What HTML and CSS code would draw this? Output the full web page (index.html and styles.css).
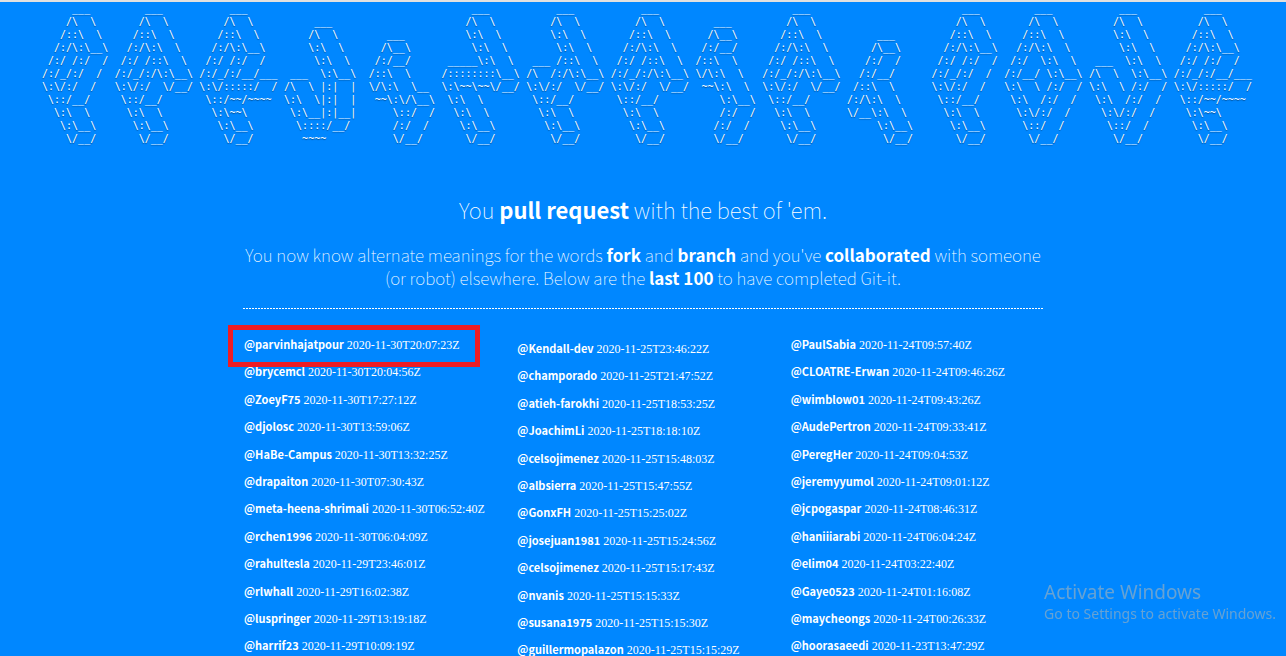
FILE: index.html
```html
<!DOCTYPE html>
<html lang="en">
<head>
<meta charset="utf-8">
<title>Git-it</title>
<link rel="stylesheet" href="styles.css">
</head>
<body>
<header class="banner">
<pre class="glyph">
     ___
    /\  \
   /::\  \
  /:/\:\__\
 /:/ /:/  /
/:/_/:/  /
\:\/:/  /
 \::/__/
  \:\  \
   \:\__\
    \/__/</pre>
<pre class="glyph">
     ___
    /\  \
   /::\  \
  /:/\:\  \
 /:/ /::\  \
/:/_/:/\:\__\
\:\/:/  \/__/
 \::/__/
  \:\  \
   \:\__\
    \/__/</pre>
<pre class="glyph">
     ___
    /\  \
   /::\  \
  /:/\:\__\
 /:/ /:/  /
/:/_/:/__/___
\:\/:::::/  /
 \::/~~/~~~~
  \:\~~\
   \:\__\
    \/__/</pre>
<pre class="glyph">

     ___
    /\  \
    \:\  \
     \:\  \
 ___  \:\__\ 
/\  \ |:|  |
\:\  \|:|  |
 \:\__|:|__|
  \::::/__/
   ~~~~</pre>
<pre class="glyph">


   ___
  /\__\
 /:/__/
/::\  \
\/\:\  \__
 ~~\:\/\__\
    \::/  /
    /:/  /
    \/__/</pre>
<pre class="glyph">
     ___
    /\  \
    \:\  \
     \:\  \
 _____\:\  \
/::::::::\__\
\:\~~\~~\/__/
 \:\  \
  \:\  \
   \:\__\
    \/__/</pre>
<pre class="glyph">
     ___
    /\  \
    \:\  \
     \:\  \
 ___ /::\  \
/\  /:/\:\__\
\:\/:/  \/__/
 \::/__/
  \:\  \
   \:\__\
    \/__/</pre>
<pre class="glyph">
     ___
    /\  \
   /::\  \
  /:/\:\  \
 /:/ /::\  \
/:/_/:/\:\__\
\:\/:/  \/__/
 \::/__/
  \:\  \
   \:\__\
    \/__/</pre>
<pre class="glyph">

   ___
  /\__\
 /:/__/
/::\  \
\/\:\  \
 ~~\:\  \
    \:\__\
    /:/  /
   /:/  /
   \/__/</pre>
<pre class="glyph">
     ___
    /\  \
   /::\  \
  /:/\:\  \
 /:/ /::\  \
/:/_/:/\:\__\
\:\/:/  \/__/
 \::/__/
  \:\  \
   \:\__\
    \/__/</pre>
<pre class="glyph">


     ___
    /\__\
   /:/  /
  /:/__/
 /::\  \
/:/\:\  \
\/__\:\  \
     \:\__\  
      \/__/</pre>
<pre class="glyph">
     ___
    /\  \
   /::\  \
  /:/\:\__\
 /:/ /:/  /
/:/_/:/  /
\:\/:/  /
 \::/__/
  \:\  \
   \:\__\
    \/__/</pre>
<pre class="glyph">
     ___
    /\  \
   /::\  \
  /:/\:\  \
 /:/  \:\  \
/:/__/ \:\__\
\:\  \ /:/  /
 \:\  /:/  /
  \:\/:/  /
   \::/  /
    \/__/</pre>
<pre class="glyph">
     ___
    /\  \
    \:\  \
     \:\  \
 ___  \:\  \
/\  \  \:\__\
\:\  \ /:/  /
 \:\  /:/  /
  \:\/:/  /
   \::/  /
    \/__/</pre>
<pre class="glyph">
     ___
    /\  \
   /::\  \
  /:/\:\__\
 /:/ /:/  /
/:/_/:/__/___
\:\/:::::/  /
 \::/~~/~~~~
  \:\~~\
   \:\__\
    \/__/</pre>
</header>
<main class="content">
<h1 class="title">You <strong>pull request</strong> with the best of 'em.</h1>
<p class="intro">You now know alternate meanings for the words <strong>fork</strong> and <strong>branch</strong> and you've <strong>collaborated</strong> with someone (or robot) elsewhere. Below are the <strong>last 100</strong> to have completed Git-it.</p>
<hr class="rule">
<div class="columns">
<ul class="people">
<li class="person person-marked"><strong>@parvinhajatpour</strong> <time>2020-11-30T20:07:23Z</time></li>
<li class="person"><strong>@brycemcl</strong> <time>2020-11-30T20:04:56Z</time></li>
<li class="person"><strong>@ZoeyF75</strong> <time>2020-11-30T17:27:12Z</time></li>
<li class="person"><strong>@djolosc</strong> <time>2020-11-30T13:59:06Z</time></li>
<li class="person"><strong>@HaBe-Campus</strong> <time>2020-11-30T13:32:25Z</time></li>
<li class="person"><strong>@drapaiton</strong> <time>2020-11-30T07:30:43Z</time></li>
<li class="person"><strong>@meta-heena-shrimali</strong> <time>2020-11-30T06:52:40Z</time></li>
<li class="person"><strong>@rchen1996</strong> <time>2020-11-30T06:04:09Z</time></li>
<li class="person"><strong>@rahultesla</strong> <time>2020-11-29T23:46:01Z</time></li>
<li class="person"><strong>@rlwhall</strong> <time>2020-11-29T16:02:38Z</time></li>
<li class="person"><strong>@luspringer</strong> <time>2020-11-29T13:19:18Z</time></li>
<li class="person"><strong>@harrif23</strong> <time>2020-11-29T10:09:19Z</time></li>
</ul>
<ul class="people people-lowered">
<li class="person"><strong>@Kendall-dev</strong> <time>2020-11-25T23:46:22Z</time></li>
<li class="person"><strong>@champorado</strong> <time>2020-11-25T21:47:52Z</time></li>
<li class="person"><strong>@atieh-farokhi</strong> <time>2020-11-25T18:53:25Z</time></li>
<li class="person"><strong>@JoachimLi</strong> <time>2020-11-25T18:18:10Z</time></li>
<li class="person"><strong>@celsojimenez</strong> <time>2020-11-25T15:48:03Z</time></li>
<li class="person"><strong>@albsierra</strong> <time>2020-11-25T15:47:55Z</time></li>
<li class="person"><strong>@GonxFH</strong> <time>2020-11-25T15:25:02Z</time></li>
<li class="person"><strong>@josejuan1981</strong> <time>2020-11-25T15:24:56Z</time></li>
<li class="person"><strong>@celsojimenez</strong> <time>2020-11-25T15:17:43Z</time></li>
<li class="person"><strong>@nvanis</strong> <time>2020-11-25T15:15:33Z</time></li>
<li class="person"><strong>@susana1975</strong> <time>2020-11-25T15:15:30Z</time></li>
<li class="person"><strong>@guillermopalazon</strong> <time>2020-11-25T15:15:29Z</time></li>
</ul>
<ul class="people">
<li class="person"><strong>@PaulSabia</strong> <time>2020-11-24T09:57:40Z</time></li>
<li class="person"><strong>@CLOATRE-Erwan</strong> <time>2020-11-24T09:46:26Z</time></li>
<li class="person"><strong>@wimblow01</strong> <time>2020-11-24T09:43:26Z</time></li>
<li class="person"><strong>@AudePertron</strong> <time>2020-11-24T09:33:41Z</time></li>
<li class="person"><strong>@PeregHer</strong> <time>2020-11-24T09:04:53Z</time></li>
<li class="person"><strong>@jeremyyumol</strong> <time>2020-11-24T09:01:12Z</time></li>
<li class="person"><strong>@jcpogaspar</strong> <time>2020-11-24T08:46:31Z</time></li>
<li class="person"><strong>@haniiiarabi</strong> <time>2020-11-24T06:04:24Z</time></li>
<li class="person"><strong>@elim04</strong> <time>2020-11-24T03:22:40Z</time></li>
<li class="person"><strong>@Gaye0523</strong> <time>2020-11-24T01:16:08Z</time></li>
<li class="person"><strong>@maycheongs</strong> <time>2020-11-24T00:26:33Z</time></li>
<li class="person"><strong>@hoorasaeedi</strong> <time>2020-11-23T13:47:29Z</time></li>
</ul>
</div>
</main>
<aside class="watermark">
<p class="watermark-title">Activate Windows</p>
<p class="watermark-text">Go to Settings to activate Windows.</p>
</aside>
</body>
</html>
```
FILE: styles.css
```css
*,
*::after { box-sizing: border-box; }

body {
  margin: 0;
  height: 100vh;
  overflow: hidden;
  border-top: 2px solid #e0e0e0;
  background: #0087ff;
  color: #fff;
  font-family: "Noto Sans CJK SC", "Noto Sans", sans-serif;
}

.banner {
  display: flex;
  justify-content: space-between;
  padding: 0 34px 0 42px;
}

.glyph {
  margin: 0;
  font: 10px/13px "DejaVu Sans Mono", monospace;
  text-shadow: 0 1px 1px rgba(0, 0, 0, 0.4);
}

.content {
  max-width: 800px;
  margin: 0 auto;
  padding-top: 48px;
}

.title,
.intro {
  margin: 0;
  font-weight: 100;
  text-align: center;
}

.title {
  font-size: 22px;
  line-height: 32px;
}

.intro {
  margin-top: 18px;
  font-size: 17px;
  line-height: 23px;
}

strong { font-weight: 700; }

.rule {
  height: 1px;
  margin: 19px 0 0;
  border: 0;
  background: repeating-linear-gradient(90deg, #fff 0 2px, transparent 2px 3px);
}

.columns {
  display: grid;
  grid-template-columns: repeat(3, 1fr);
  gap: 20px;
  padding-top: 28px;
}

.people {
  margin: 0;
  padding: 0 0 0 1px;
  list-style: none;
}

.people-lowered { padding-top: 4px; }

.person {
  position: relative;
  padding-bottom: 10px;
  font-family: "Liberation Serif", serif;
  font-size: 12px;
  line-height: 1.45;
  white-space: nowrap;
}

.person strong {
  font-family: "Noto Sans CJK SC", "Noto Sans", sans-serif;
  font-size: 11px;
  line-height: 1;
}

.person-marked::after {
  content: "";
  position: absolute;
  top: -12px;
  left: -16px;
  z-index: 1;
  width: 252px;
  height: 42px;
  border: 5px solid #ed1c24;
}

.watermark {
  position: fixed;
  right: 10px;
  bottom: 32px;
  color: #66a2d4;
  font-family: "Noto Sans", sans-serif;
}

.watermark p { margin: 0; }

.watermark-title {
  font-size: 19px;
  line-height: 24px;
}

.watermark-text {
  font-size: 14px;
  line-height: 20px;
}
```
